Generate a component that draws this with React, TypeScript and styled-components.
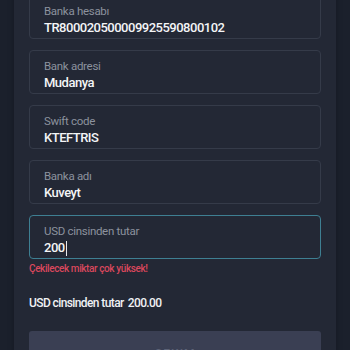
import React from "react";
import styled, { createGlobalStyle } from "styled-components";

const Global = createGlobalStyle`
  html, body { margin: 0; padding: 0; background: #1b202c; }
  body { font-family: Roboto, "Noto Sans", "Liberation Sans", sans-serif; overflow: hidden; }
`;

const Page = styled.div`
  height: 350px;
  padding: 0 14px;
  overflow: hidden;
`;

const Panel = styled.div`
  background: #232835;
  margin-top: -5px;
  padding: 0 15px 20px;
  display: flex;
  flex-direction: column;
  min-height: 400px;
  box-shadow: 0 0 6px rgba(0, 0, 0, 0.25);
`;

const Fields = styled.div`
  display: flex;
  flex-direction: column;
  gap: 11px;
`;

const Field = styled.div<{ $focused?: boolean }>`
  box-sizing: border-box;
  height: 44px;
  border: 1px solid ${(p) => (p.$focused ? "#3e7f92" : "#353b49")};
  border-radius: 4px;
  padding: 9px 14px 0;
  display: flex;
  flex-direction: column;
  gap: 2px;
`;

const Label = styled.div`
  font-size: 11.5px;
  line-height: 13px;
  color: #8c929e;
  letter-spacing: -0.3px;
`;

const Value = styled.div`
  font-size: 13px;
  line-height: 16px;
  font-weight: 500;
  color: #f4f5f7;
  letter-spacing: -0.5px;
  display: flex;
  align-items: center;
`;

const Caret = styled.span`
  display: inline-block;
  width: 1px;
  height: 15px;
  background: #e8e9ec;
  margin-left: 1px;
`;

const ErrorText = styled.div`
  margin-top: 3px;
  font-size: 10px;
  line-height: 13px;
  font-weight: 500;
  color: #d9475c;
  letter-spacing: -0.4px;
`;

const Summary = styled.div`
  margin-top: 21px;
  font-size: 12px;
  line-height: 15px;
  font-weight: 500;
  color: #f0f1f4;
  letter-spacing: -0.6px;
  display: flex;
  gap: 4px;
`;

const Button = styled.button`
  margin-top: 20px;
  height: 44px;
  border: none;
  border-radius: 3px;
  background: #3a3f53;
  color: #5c6276;
  font-family: inherit;
  font-size: 12px;
  font-weight: 500;
  letter-spacing: 1px;
  padding-top: 2px;
`;

const rows = [
  { label: "Banka hesabı", value: "TR800020500009925590800102" },
  { label: "Bank adresi", value: "Mudanya" },
  { label: "Swift code", value: "KTEFTRIS" },
  { label: "Banka adı", value: "Kuveyt" },
];

export default function App() {
  return (
    <Page>
      <Global />
      <Panel>
        <Fields>
          {rows.map((r) => (
            <Field key={r.label}>
              <Label>{r.label}</Label>
              <Value>{r.value}</Value>
            </Field>
          ))}
          <Field $focused>
            <Label>USD cinsinden tutar</Label>
            <Value>
              200
              <Caret />
            </Value>
          </Field>
        </Fields>
        <ErrorText>Çekilecek miktar çok yüksek!</ErrorText>
        <Summary>
          <span>USD cinsinden tutar</span>
          <span>200.00</span>
        </Summary>
        <Button>ÇEKIM</Button>
      </Panel>
    </Page>
  );
}
